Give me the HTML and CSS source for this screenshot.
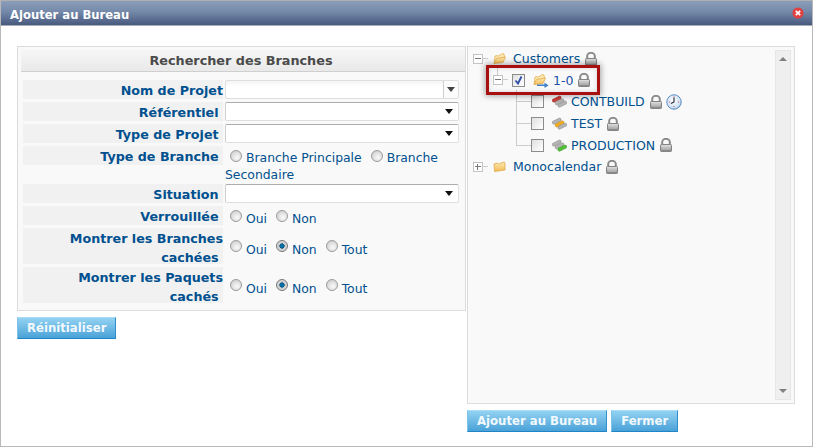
FILE: index.html
```html
<!DOCTYPE html>
<html lang="fr">
<head>
<meta charset="utf-8">
<title>Ajouter au Bureau</title>
<link rel="stylesheet" href="styles.css">
</head>
<body>
<svg class="defs" width="0" height="0" aria-hidden="true">
  <defs>
    <linearGradient id="lockg" x1="0" y1="0" x2="0" y2="1"><stop offset="0" stop-color="#e8e8e8"/><stop offset="0.5" stop-color="#b0b0b0"/><stop offset="1" stop-color="#7c7c7c"/></linearGradient>
    <linearGradient id="foldg" x1="0" y1="0" x2="0" y2="1"><stop offset="0" stop-color="#fdeab0"/><stop offset="1" stop-color="#f4bb58"/></linearGradient>
    <radialGradient id="clockg" cx="0.45" cy="0.4" r="0.7"><stop offset="0" stop-color="#ffffff"/><stop offset="0.7" stop-color="#cfe3f5"/><stop offset="1" stop-color="#6f9fd0"/></radialGradient>
    <symbol id="lock" viewBox="0 0 12 14">
      <path d="M2.200 7V4a3.800 3.200 0 0 1 7.600 0v3" fill="none" stroke="#8a8a8a" stroke-width="2"/>
      <rect x="0.500" y="6.500" width="11" height="7" rx="0.800" fill="url(#lockg)" stroke="#848484"/>
      <path d="M1.500 9h9M1.500 11h9" stroke="#d4d4d4" stroke-width="0.700"/>
    </symbol>
    <symbol id="folder-open" viewBox="0 0 13 13">
      <path d="M1 11.500 2 4l2-.5 1 .7 4.500-2.700 1.500.5.500 3" fill="#fbe7ae" stroke="#e2b25a" stroke-width="0.800"/>
      <path d="M1 11.500 3.500 6.500l9-1.500-2.500 5.500z" fill="url(#foldg)" stroke="#e2ab4e" stroke-width="0.800"/>
    </symbol>
    <symbol id="folder" viewBox="0 0 13 13">
      <path d="M1.500 11.500 1 4l3-1 1.500 1 5.500-2 1 .7v7.300z" fill="url(#foldg)" stroke="#dfaa50" stroke-width="0.800"/>
    </symbol>
    <symbol id="branch-shape" viewBox="0 0 15 13">
      <path d="M0.500 4.500 7.500 1 9 1.800V3.800L2 7.300 .5 6.500z" fill="var(--a)" stroke="var(--as)" stroke-width="0.600"/>
      <path d="M3.300 7.300 10.300 3.800 11.800 4.600V6.600L4.800 10.100 3.300 9.300z" fill="var(--b)" stroke="var(--bs)" stroke-width="0.600"/>
      <path d="M6 9.500 13 6 14.500 6.800V8.800L7.500 12.300 6 11.500z" fill="var(--c)" stroke="var(--cs)" stroke-width="0.600"/>
    </symbol>
  </defs>
</svg>

<div class="window">
  <header class="titlebar">
    <h1 class="title">Ajouter au Bureau</h1>
    <svg class="close" width="12" height="12" viewBox="0 0 12 12" aria-label="Fermer">
      <circle cx="6" cy="6" r="5.500" fill="#e2403f"/>
      <path d="M3.800 3.800l4.400 4.400M8.200 3.800l-4.400 4.400" stroke="#fff" stroke-width="1.700"/>
    </svg>
  </header>

  <main class="content">
    <section class="left">
      <div class="panel search">
        <h2 class="panel-head">Rechercher des Branches</h2>
        <div class="form">
          <div class="label">Nom de Projet</div>
          <div class="field combo"><span class="combo-btn"><i class="arrow"></i></span></div>

          <div class="label">Référentiel&nbsp;</div>
          <div class="field select"><i class="arrow"></i></div>

          <div class="label">Type de Projet&nbsp;</div>
          <div class="field select"><i class="arrow"></i></div>

          <div class="label top">Type de Branche&nbsp;</div>
          <div class="value wrap"><input class="radio" type="radio" name="tb">Branche Principale <input class="radio" type="radio" name="tb">Branche Secondaire</div>

          <div class="label">Situation&nbsp;</div>
          <div class="field select"><i class="arrow"></i></div>

          <div class="label">Verrouillée&nbsp;</div>
          <div class="value"><input class="radio" type="radio" name="v">Oui <input class="radio" type="radio" name="v">Non</div>

          <div class="label tall">Montrer les Branches cachées&nbsp;</div>
          <div class="value"><input class="radio" type="radio" name="mb">Oui <input class="radio" type="radio" name="mb" checked>Non <input class="radio" type="radio" name="mb">Tout</div>

          <div class="label tall">Montrer les Paquets cachés&nbsp;</div>
          <div class="value"><input class="radio" type="radio" name="mp">Oui <input class="radio" type="radio" name="mp" checked>Non <input class="radio" type="radio" name="mp">Tout</div>
        </div>
      </div>
      <div class="actions"><button class="btn" type="button">Réinitialiser</button></div>
    </section>

    <section class="right">
      <div class="panel treepanel">
        <div class="tree">
          <div class="node n0">
            <span class="exp minus"></span>
            <svg class="ico-f"><use href="#folder-open"/></svg>
            <a class="name">Customers</a>
            <svg class="lock"><use href="#lock"/></svg>
          </div>
          <div class="node n1">
            <span class="exp minus"></span>
            <span class="check on"><svg width="11" height="11" viewBox="0 0 11 11"><path d="M2.500 5.500 5 8.500 8.500 1.500" fill="none" stroke="#2f4fa6" stroke-width="1.800"/></svg></span>
            <svg class="ico-fa" width="16" height="15" viewBox="0 0 16 15">
              <use href="#folder-open" width="13" height="13"/>
              <path d="M4 11.500h7.500V9.500l4 3-4 2.500v-2H4z" fill="#3f7fc4"/>
            </svg>
            <a class="name sel">1-0</a>
            <svg class="lock"><use href="#lock"/></svg>
          </div>
          <div class="node n2">
            <span class="check"></span>
            <svg class="ico-b red"><use href="#branch-shape"/></svg>
            <a class="name">CONTBUILD</a>
            <svg class="lock"><use href="#lock"/></svg>
            <svg class="clock" width="16" height="16" viewBox="0 0 16 16">
              <circle cx="8" cy="8" r="7.200" fill="url(#clockg)" stroke="#5b8cc2"/>
              <path d="M8 3.500V8l-3 1.500" fill="none" stroke="#223" stroke-width="1.100"/>
              <path d="M8 2.500v1M13 8h-1M8 13v-1M3 8h1" stroke="#c33" stroke-width="0.900"/>
            </svg>
          </div>
          <div class="node n2">
            <span class="check"></span>
            <svg class="ico-b orange"><use href="#branch-shape"/></svg>
            <a class="name">TEST</a>
            <svg class="lock"><use href="#lock"/></svg>
          </div>
          <div class="node n2">
            <span class="check"></span>
            <svg class="ico-b green"><use href="#branch-shape"/></svg>
            <a class="name">PRODUCTION</a>
            <svg class="lock"><use href="#lock"/></svg>
          </div>
          <div class="node n0">
            <span class="exp plus"></span>
            <svg class="ico-f"><use href="#folder"/></svg>
            <a class="name">Monocalendar</a>
            <svg class="lock"><use href="#lock"/></svg>
          </div>
          <span class="branch-line"></span>
          <span class="highlight"></span>
        </div>
        <div class="scrollbar"><i class="sb-up"></i><i class="sb-down"></i></div>
      </div>
      <div class="actions">
        <button class="btn" type="button">Ajouter au Bureau</button>
        <button class="btn" type="button">Fermer</button>
      </div>
    </section>
  </main>
</div>
</body>
</html>
```

FILE: styles.css
```css
* { box-sizing: border-box; }
html, body { margin: 0; padding: 0; }
body { width: 813px; height: 447px; overflow: hidden; background: #fff; font-family: "DejaVu Sans", sans-serif; font-size: 12.400px; color: #00508f; }
.defs { position: absolute; }

.window { width: 813px; height: 447px; border: 1px solid #b9b9b9; border-top-color: #b0b0b0; background: #fff; display: flex; flex-direction: column; }

.titlebar { height: 25px; flex: none; display: flex; align-items: center; justify-content: space-between; padding: 4px 8px 0 9px; background: linear-gradient(#8b9dba, #7489a9 45%, #48597e); border-bottom: 1px solid #a9adb5; }
.title { margin: 0; font-size: 11.600px; font-weight: 700; color: #fff; }
.close { margin-top: -4px; }

.content { display: flex; align-items: flex-start; padding: 20px 0 0 16px; gap: 1px; }
.left { width: 449px; flex: none; }
.right { width: 328px; flex: none; }

.panel { border: 1px solid #dcdcdc; background: #f9f9f9; padding: 3px; }
.search { height: 265px; padding-right: 0; }

.panel-head { margin: 0; height: 22px; line-height: 22px; padding-right: 4px; text-align: center; font-size: 12.800px; font-weight: 700; color: #4a4a4a; background: linear-gradient(#f6f6f6, #e9e9e9); border-bottom: 1px solid #cfcfcf; }

.form { display: grid; grid-template-columns: 200px 234px; column-gap: 2px; row-gap: 3px; padding: 8px 0 0 2px; }

.label { height: 19px; line-height: 18px; padding-top: 2px; background: #f1f1f1; text-align: right; font-size: 12.700px; font-weight: 700; color: #00508f; }
.label.top { align-self: start; }
.label.tall { height: 36px; line-height: 18.500px; padding-top: 2px; }

.field { height: 19px; background: #fff; border: 1px solid #dedede; border-radius: 2px; position: relative; display: flex; align-items: center; justify-content: flex-end; }
.select { border-top-color: #adadad; border-left-color: #d0d0d0; padding-right: 5px; }
.combo { background: linear-gradient(#f4f4f4, #fff 35%); }
.combo-btn { width: 15px; height: 17px; border-left: 1px solid #cfcfcf; display: flex; align-items: center; justify-content: center; background: #fbfbfb; }
.arrow { display: block; width: 0; height: 0; border-left: 4px solid transparent; border-right: 4px solid transparent; border-top: 5px solid #111; }
.combo .arrow { border-top-color: #444; }

.value { display: flex; align-items: center; height: 19px; align-self: center; padding-top: 7px; color: #00508f; line-height: 16px; white-space: pre; }
.value.wrap { display: block; height: 35px; padding-top: 3px; line-height: 17px; white-space: normal; }
.radio { appearance: none; -webkit-appearance: none; display: inline-block; vertical-align: 0; width: 12px; height: 12px; margin: -7px 4px 0 5px; border-radius: 50%; border: 1px solid #9b9b9b; background: radial-gradient(circle at 60% 65%, #fafafa, #d6d6d6 70%, #bdbdbd); }
.radio:checked { border-color: #777; background: radial-gradient(circle at 50% 50%, #0b7fb8 0, #045a8a 34%, #c8c8c8 40%, #e8e8e8 100%); }

.actions { display: flex; gap: 4px; margin-top: 6px; }
.btn { height: 22px; padding: 0 9px; border: 0; border-top: 1px solid #a8dcf6; border-left: 1px solid #7ec4ea; border-right: 1px solid #2f8fcc; border-bottom: 1px solid #1f85c6; background: linear-gradient(#93d2f2, #4aa2d8); color: #f2f9fd; font-family: inherit; font-size: 11.700px; font-weight: 700; cursor: pointer; }

.treepanel { height: 358px; padding: 3px; position: relative; display: flex; justify-content: space-between; }
.tree { position: relative; flex: 1; }
.scrollbar { width: 16px; height: 350px; background: #efefef; border: 1px solid #e6e6e6; position: relative; display: flex; flex-direction: column; justify-content: space-between; align-items: center; padding: 6px 0; }
.sb-up, .sb-down { display: block; width: 0; height: 0; border-left: 4px solid transparent; border-right: 4px solid transparent; }
.sb-up { border-bottom: 4px solid #808080; }
.sb-down { border-top: 4px solid #808080; }

.node { height: 21.600px; display: flex; align-items: center; position: relative; white-space: nowrap; font-size: 12.500px; }
.node:first-child { margin-top: -2px; }
.n0 { padding-left: 2px; }
.n1 { padding-left: 22px; }
.n2 { padding-left: 60px; }
.name { color: #00508f; }
.name.sel { color: #1d4fa8; margin-left: 4px; }

.exp { width: 10px; height: 10px; flex: none; border: 1px solid #c4c4c4; background: #fff no-repeat; position: relative; margin-right: 10px; }
.minus { background-image: linear-gradient(#777, #777); background-size: 6px 1px; background-position: 1px 3px; }
.plus { background-image: linear-gradient(#777, #777), linear-gradient(#777, #777); background-size: 6px 1px, 1px 6px; background-position: 1px 3px, 3px 1px; }
.exp::after { content: ""; position: absolute; left: 9px; top: 3px; width: 5px; height: 1px; background: #ccc; }
.n1 .exp { margin-right: 9px; }
.n1 .exp::before { content: ""; position: absolute; left: 3px; top: -8px; width: 1px; height: 7px; background: #ccc; }

.check { width: 13px; height: 13px; flex: none; border: 1px solid #8c8c8c; background: linear-gradient(135deg, #e0e0e0, #fff); display: flex; align-items: center; justify-content: center; margin-right: 8px; }
.ico-f { width: 13px; height: 13px; flex: none; margin-right: 7px; }
.ico-fa { flex: none; }
.ico-b { width: 15px; height: 13px; flex: none; margin-right: 4px; --a: #b4b4b4; --b: #b4b4b4; --c: #b4b4b4; --as: #8e8e8e; --bs: #8e8e8e; --cs: #8e8e8e; }
.red { --a: #cc3a34; --as: #a62a26; }
.orange { --b: #f2ac1c; --bs: #cc8c14; }
.green { --c: #52c234; --cs: #329a22; }
.lock { width: 12px; height: 14px; flex: none; margin-left: 5px; }
.clock { flex: none; margin-left: 4px; }

.branch-line { position: absolute; left: 45px; top: 40px; width: 15px; height: 56px; border-left: 1px solid #ccc; background: linear-gradient(#ccc, #ccc) 0 11px / 15px 1px no-repeat, linear-gradient(#ccc, #ccc) 0 33px / 15px 1px no-repeat, linear-gradient(#ccc, #ccc) 0 55px / 15px 1px no-repeat; }

.highlight { position: absolute; left: 15px; top: 15px; width: 114px; height: 30px; border: 3px solid #a80f0f; box-shadow: 0 0 6px 1px rgba(0,0,0,.35), inset 0 0 4px rgba(0,0,0,.15); pointer-events: none; }
```
